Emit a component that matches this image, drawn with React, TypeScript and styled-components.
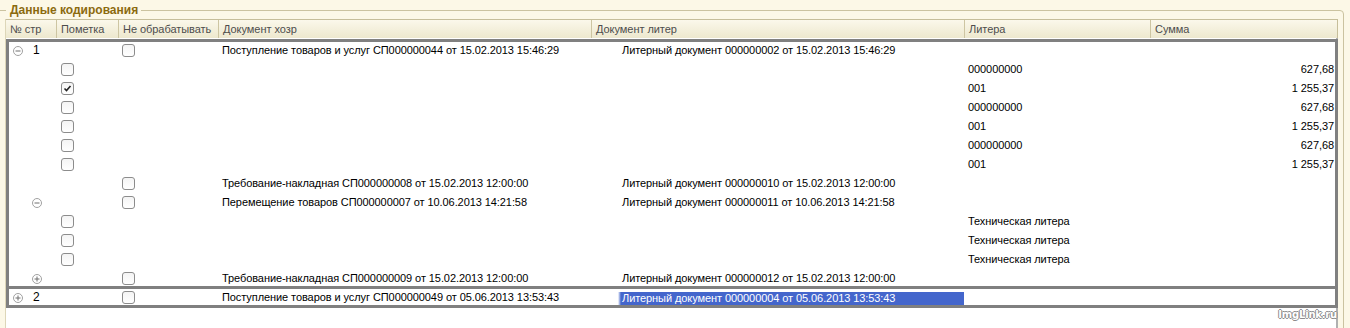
import React from "react";
import styled, { createGlobalStyle } from "styled-components";

const GlobalStyle = createGlobalStyle`
  html, body {
    margin: 0;
    padding: 0;
  }
  body {
    background: #fcf8e7;
    font-family: "Liberation Sans", Arial, sans-serif;
    font-size: 11px;
    color: #000;
    overflow: hidden;
  }
`;

const COLS = "50px 62px 100px 373px 373px 186px 188px";

const SPage = styled.div`
  position: relative;
  height: 328px;
  overflow: hidden;
`;

const SGroupBox = styled.fieldset`
  margin: 3px 6px 0 -10px;
  padding: 2px 5px 0 15px;
  border: 1px solid #cbc3a0;
  border-radius: 4px;
  height: 360px;
  min-width: 0;
  box-sizing: border-box;
`;

const SLegend = styled.legend`
  padding: 0 3px 0 4px;
  font-size: 12px;
  line-height: 14px;
  font-weight: bold;
  color: #8b6a0f;
`;

const STable = styled.div`
  display: flex;
  flex-direction: column;
  height: 100%;
  box-shadow: -1px 0 0 #ddd6b8;
`;

const SHeader = styled.div`
  display: grid;
  grid-template-columns: ${COLS};
  height: 19px;
  box-sizing: border-box;
  border-top: 1px solid #c6be9a;
  border-right: 1px solid #c6be9a;
  background: linear-gradient(#fbf8eb, #ede8ce);
`;

const SHeadCell = styled.div`
  padding-left: 4px;
  line-height: 19px;
  color: #4d4d4d;
  white-space: nowrap;
  overflow: hidden;
  letter-spacing: -0.05px;
  border-left: 1px solid #cdc5a2;

  &:first-child {
    border-left: none;
  }
`;

const SBody = styled.div`
  flex: 1;
  background: #ffffff;
  padding-top: 3px;
  box-shadow: inset -2px 0 0 #b0b0b0;
`;

const SGroup = styled.div`
  position: relative;

  &::after {
    content: "";
    position: absolute;
    left: 0;
    right: 0;
    top: -2px;
    bottom: -1px;
    border: 3px solid #808080;
    pointer-events: none;
  }
`;

const SRow = styled.div`
  display: grid;
  grid-template-columns: ${COLS};
  height: 19px;
  line-height: 19px;
  letter-spacing: -0.08px;
`;

const SCell = styled.div<{ $pad?: number; $right?: boolean }>`
  display: flex;
  align-items: center;
  justify-content: ${(p) => (p.$right ? "flex-end" : "flex-start")};
  padding-left: ${(p) => (p.$right ? 0 : p.$pad ?? 4)}px;
  padding-right: ${(p) => (p.$right ? 4 : 0)}px;
  white-space: nowrap;
  overflow: hidden;
`;

const SNum = styled.span`
  margin-left: 10px;
  font-size: 12px;
`;

const SSelected = styled.div`
  align-self: stretch;
  flex: 1;
  margin: 4px 0 2px -28px;
  padding-left: 28px;
  line-height: 13px;
  background: linear-gradient(90deg, #ffffff 0, #ffffff 24px, #4466cc 27px);
  color: #ffffff;
`;

const SCheck = styled.span`
  display: inline-flex;
  align-items: center;
  justify-content: center;
  width: 13px;
  height: 13px;
  box-sizing: border-box;
  border: 1px solid #8c8c8c;
  border-radius: 3px;
  background: linear-gradient(#f4f4f4, #ffffff);
`;

const SExpander = styled.span`
  display: inline-flex;
  width: 10px;
  height: 10px;
`;

const SWatermark = styled.div`
  position: absolute;
  right: 13px;
  bottom: 8px;
  font-family: "DejaVu Sans", sans-serif;
  font-weight: bold;
  font-size: 10px;
  letter-spacing: -0.2px;
  color: #ffffff;
  text-shadow: 1px 0 0 #8c8c8c, -1px 0 0 #8c8c8c, 0 1px 0 #8c8c8c,
    0 -1px 0 #8c8c8c;
`;

type Row = {
  exp?: "minus" | "plus";
  level?: number;
  num?: string;
  mark?: boolean;
  skip?: boolean;
  doc?: string;
  lit?: string;
  litera?: string;
  sum?: string;
  selected?: boolean;
};

const group1: Row[] = [
  {
    exp: "minus",
    level: 0,
    num: "1",
    skip: false,
    doc: "Поступление товаров и услуг СП000000044 от 15.02.2013 15:46:29",
    lit: "Литерный документ 000000002 от 15.02.2013 15:46:29",
  },
  { mark: false, litera: "000000000", sum: "627,68" },
  { mark: true, litera: "001", sum: "1 255,37" },
  { mark: false, litera: "000000000", sum: "627,68" },
  { mark: false, litera: "001", sum: "1 255,37" },
  { mark: false, litera: "000000000", sum: "627,68" },
  { mark: false, litera: "001", sum: "1 255,37" },
  {
    skip: false,
    doc: "Требование-накладная СП000000008 от 15.02.2013 12:00:00",
    lit: "Литерный документ 000000010 от 15.02.2013 12:00:00",
  },
  {
    exp: "minus",
    level: 1,
    skip: false,
    doc: "Перемещение товаров СП000000007 от 10.06.2013 14:21:58",
    lit: "Литерный документ 000000011 от 10.06.2013 14:21:58",
  },
  { mark: false, litera: "Техническая литера" },
  { mark: false, litera: "Техническая литера" },
  { mark: false, litera: "Техническая литера" },
  {
    exp: "plus",
    level: 1,
    skip: false,
    doc: "Требование-накладная СП000000009 от 15.02.2013 12:00:00",
    lit: "Литерный документ 000000012 от 15.02.2013 12:00:00",
  },
];

const group2: Row[] = [
  {
    exp: "plus",
    level: 0,
    num: "2",
    skip: false,
    doc: "Поступление товаров и услуг СП000000049 от 05.06.2013 13:53:43",
    lit: "Литерный документ 000000004 от 05.06.2013 13:53:43",
    selected: true,
  },
];

const Checkbox: React.FC<{ checked?: boolean }> = ({ checked }) => (
  <SCheck>
    {checked && (
      <svg width="9" height="9" viewBox="0 0 9 9">
        <path d="M1.5 4.5 L3.5 6.5 L7.5 2" fill="none" stroke="#222" strokeWidth="1.6" />
      </svg>
    )}
  </SCheck>
);

const Expander: React.FC<{ kind: "minus" | "plus" }> = ({ kind }) => (
  <SExpander>
    <svg width="10" height="10" viewBox="0 0 10 10">
      <circle cx="5" cy="5" r="4.5" fill="#fff" stroke="#a0a0a0" />
      <path d="M2.5 5 H7.5" stroke="#6e6e6e" />
      {kind === "plus" && <path d="M5 2.5 V7.5" stroke="#6e6e6e" />}
    </svg>
  </SExpander>
);

const TableRow: React.FC<{ row: Row }> = ({ row }) => (
  <SRow>
    <SCell $pad={7 + (row.level ?? 0) * 19}>
      {row.exp && <Expander kind={row.exp} />}
      {row.num && <SNum>{row.num}</SNum>}
    </SCell>
    <SCell $pad={5}>{row.mark !== undefined && <Checkbox checked={row.mark} />}</SCell>
    <SCell $pad={4}>{row.skip !== undefined && <Checkbox checked={row.skip} />}</SCell>
    <SCell>{row.doc}</SCell>
    <SCell $pad={31}>
      {row.selected ? <SSelected>{row.lit}</SSelected> : row.lit}
    </SCell>
    <SCell>{row.litera}</SCell>
    <SCell $right>{row.sum}</SCell>
  </SRow>
);

const headers = [
  "№ стр",
  "Пометка",
  "Не обрабатывать",
  "Документ хозр",
  "Документ литер",
  "Литера",
  "Сумма",
];

const App: React.FC = () => {
  return (
    <SPage>
      <GlobalStyle />
      <SGroupBox>
        <SLegend>Данные кодирования</SLegend>
        <STable>
          <SHeader>
            {headers.map((h) => (
              <SHeadCell key={h}>{h}</SHeadCell>
            ))}
          </SHeader>
          <SBody>
            <SGroup>
              {group1.map((r, i) => (
                <TableRow key={i} row={r} />
              ))}
            </SGroup>
            <SGroup>
              {group2.map((r, i) => (
                <TableRow key={i} row={r} />
              ))}
            </SGroup>
          </SBody>
        </STable>
      </SGroupBox>
      <SWatermark>ImgLink.ru</SWatermark>
    </SPage>
  );
};

export default App;
